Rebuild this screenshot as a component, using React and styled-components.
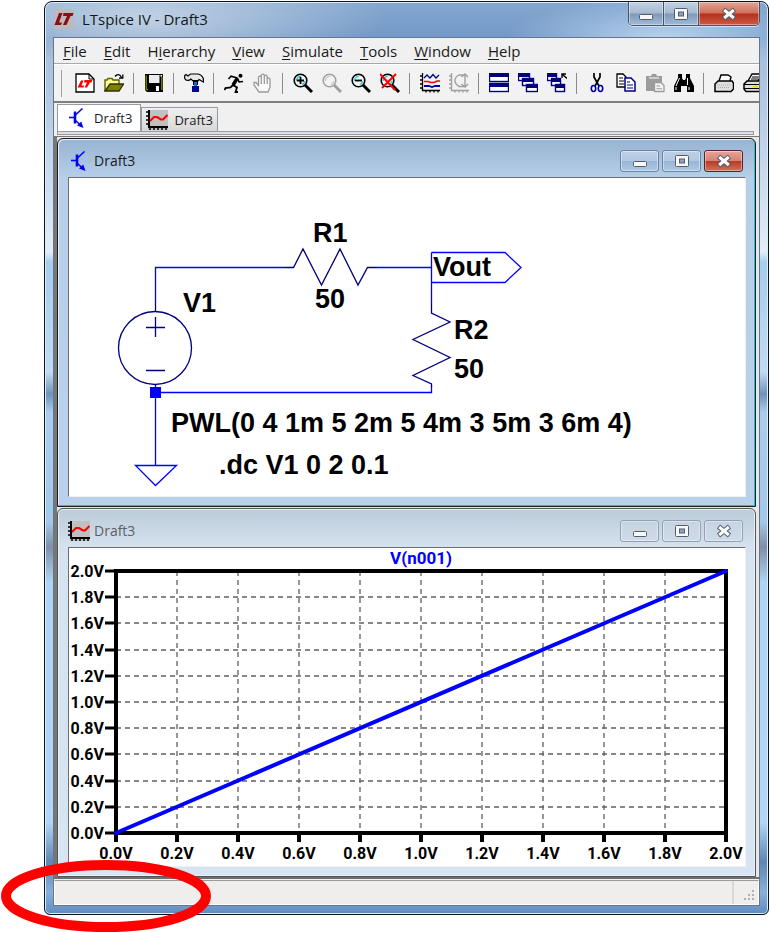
import React from "react"
import styled, { createGlobalStyle } from 'styled-components'

const GlobalStyle = createGlobalStyle`
* { box-sizing: border-box; }
body {
margin: 0;
background: #ffffff;
font-family: "Open Sans", "Noto Sans", sans-serif;
font-size: 15px;
color: #1a1a1a;
}
button {
font: inherit;
color: inherit;
padding: 0;
margin: 0;
border: 0;
background: none;
}
`

const Page = styled.div`
padding: 1px 1px 18px 44px;
`

const Frame = styled.div`
position: relative;
padding: 0 8px 8px;
border: 1px solid #0c151d;
border-radius: 8px 8px 6px 6px;
box-shadow: inset 0 0 0 1px #dcebf8;
background:
radial-gradient(ellipse 240px 60px at 100px 16px, rgba(205, 218, 232, 0.85), transparent),
radial-gradient(ellipse 160px 40px at 620px 36px, rgba(190, 217, 242, 0.9), transparent),
linear-gradient(180deg, #86a8cf 0px, #7298c8 36px, #a9bfdc 60px, #cbdcee 180px, #e2edf8 250px, #a5cdec 260px, #c2dbf2 370px, #6f93bb 392px, #a9cdea 410px, #a5c8ea 520px, #7f8fa8 545px, #b0d4f4 580px, #b4d6f6 820px, #5f86b4 860px, #88b0dc 890px, #5f8cc0 100%);
`

const TitleBar = styled.header`
display: flex;
align-items: flex-start;
height: 35px;
padding-left: 1px;
`

const AppTitle = styled.h1`
flex: 1;
display: flex;
align-items: center;
gap: 8px;
margin: 0;
padding-top: 7px;
font-size: 15px;
line-height: 20px;
font-weight: normal;
color: #101820;
`

const WindowButtons = styled.div`
display: flex;
height: 24px;
border: 1px solid #45556a;
border-top: 0;
border-radius: 0 0 5px 5px;
overflow: hidden;
box-shadow: 0 1px 0 #cfe3f5;
`

const WindowButton = styled.button`
display: flex;
align-items: center;
justify-content: center;
width: ${props => props.$close ? '60px' : '35px'};
border-right: ${props => props.$close ? '0' : '1px solid #45556a'};
box-shadow: inset 0 0 0 1px rgba(255, 255, 255, 0.4);
background: ${props => props.$close
    ? 'linear-gradient(#e2a596 0%, #d0705c 48%, #b5301c 52%, #cc5b42 100%)'
    : 'linear-gradient(#c3d2e3 0%, #a5b9d0 48%, #7f98b6 52%, #a0bbd8 100%)'};
`

const Client = styled.div`
border: 1px solid #66778c;
background: #f0f0f0;
`

const MenuBar = styled.nav`
display: flex;
gap: 17px;
height: 26px;
padding: 0 9px;
border-bottom: 1px solid #a8a8a8;
`

const MenuItem = styled.button`
line-height: 24px;
text-underline-offset: 2px;
`

const ToolBar = styled.div`
display: flex;
align-items: center;
height: 39px;
padding-left: 6px;
border-top: 1px solid #ffffff;
border-bottom: 2px solid #7f7f7f;
background: #f2f2f2;
overflow: hidden;
`

const Grip = styled.div`
flex: none;
width: 2px;
height: 27px;
margin-right: 8px;
border-right: 1px solid #a0a0a0;
`

const Divider = styled.div`
flex: none;
width: 1px;
height: 21px;
margin: 0 5px;
background: #8c8c8c;
`

const ToolButton = styled.button`
flex: none;
display: flex;
justify-content: center;
width: 29px;
`

const TabBar = styled.div`
display: flex;
align-items: flex-end;
height: 28px;
padding-left: 3px;
`

const Tab = styled.button`
display: flex;
align-items: center;
gap: 6px;
height: ${props => props.$selected ? '27px' : '24px'};
padding: ${props => props.$selected ? '0 8px' : '0 4px'};
border: 1px solid #9a9aa4;
border-bottom: 0;
background: ${props => props.$selected ? '#ffffff' : 'linear-gradient(#f0f0f0, #d8d8d8)'};
font-size: 13px;
white-space: nowrap;
`

const TabEdge = styled.div`
height: 4px;
margin: 0 5px 1px 3px;
border: 1px solid #9a9aa4;
background: #dedee4;
`

const Workspace = styled.main`
display: grid;
gap: 1px;
padding: 1px 3px 0 0;
border-left: 3px solid #777777;
border-top: 1px solid #777777;
border-bottom: 2px solid #6e6e6e;
background: #e8e8e8;
`

const Child = styled.section`
padding: 0 9px 9px 10px;
border: 1px solid ${props => props.$active ? '#1b1b1b' : '#555555'};
border-radius: 6px 6px 0 0;
box-shadow: ${props => props.$active ? 'inset -1px -1px 0 #1fc2d6, inset 1px 1px 0 #e6f0fa' : 'inset 0 0 0 1px #e9f0f7'};
background: ${props => props.$active
    ? 'linear-gradient(#98b4d2 0px, #b6cee8 38px, #b9d1ea 100%)'
    : 'linear-gradient(#bccbd9 0px, #d5e2ef 38px, #d7e4f2 100%)'};
`

const ChildTitle = styled.header`
display: flex;
align-items: center;
gap: 3px;
height: 38px;
padding: 6px 3px 0 0;
`

const ChildName = styled.h2`
flex: 1;
display: flex;
align-items: center;
gap: 4px;
margin: 0;
font-size: 14px;
line-height: 20px;
font-weight: normal;
color: ${props => props.$active ? '#1a1a1a' : '#5a5f66'};
`

const ChildButton = styled.button`
display: flex;
align-items: center;
justify-content: center;
width: 39px;
height: 22px;
border: 1px solid ${props => props.$red ? '#5a2228' : props.$active ? '#6d84a2' : '#939fb8'};
border-radius: 3px;
box-shadow: inset 0 0 0 1px rgba(255, 255, 255, 0.4);
background: ${props => props.$red
    ? 'linear-gradient(#e4a79c 0%, #d88272 48%, #b63c26 52%, #d0735c 100%)'
    : props.$active
        ? 'linear-gradient(#bdd1e7 0%, #b2c9e2 48%, #98b5d4 52%, #afcae6 100%)'
        : 'linear-gradient(#c6d3e0, #cfdbe8)'};
`

const Sheet = styled.div`
border: 1px solid #f0f0f0;
border-top-color: #6f6f6f;
border-left-color: #6f6f6f;
background: #ffffff;
`

const Drawing = styled.svg`
display: block;
width: 100%;
height: auto;
`

const SchematicText = styled.text`
font-family: "Liberation Sans", Arial, sans-serif;
font-weight: bold;
font-size: 27px;
fill: #000000;
`

const AxisText = styled.text`
font-family: Roboto, "Liberation Sans", sans-serif;
font-weight: bold;
font-size: ${props => props.$trace ? '17px' : '16px'};
fill: ${props => props.$trace ? '#0000ff' : '#000000'};
`

const StatusBar = styled.footer`
display: flex;
align-items: stretch;
justify-content: flex-end;
height: 25px;
margin-top: 1px;
border: 1px solid #ffffff;
border-top: 1px solid #9b9b9b;
background: #f0eded;
`

const StatusGrip = styled.div`
display: flex;
align-items: flex-end;
justify-content: flex-end;
width: 26px;
padding: 2px;
border-left: 2px solid #d8d8d8;
`

const Marker = styled.svg`
position: absolute;
left: -45px;
bottom: -19px;
width: 212px;
height: 74px;
pointer-events: none;
`

const LogoIcon = () => (
    <svg width="20" height="20" viewBox="0 0 20 20">
        <rect width="20" height="20" fill="#bdb9be" />
        <path d="M5 4 H8.5 L5 13.5 H8 L7 16 H0.5 Z" fill="#8a0f14" />
        <path d="M9.5 4 H19.5 L18.5 7 H16.5 L12.5 16 H9 L13 7 H9 Z" fill="#8a0f14" />
    </svg>
)

const TransistorIcon = () => (
    <svg width="22" height="20" viewBox="-3 0 22 20" stroke="#0000ff" fill="none">
        <path d="M0 9.5 H6" strokeWidth="1.6" />
        <path d="M6 3.5 V15.5" strokeWidth="2.6" />
        <path d="M6 7.5 L13.5 0.5 M6 12 L13 18.5" strokeWidth="1.5" />
        <path d="M14.5 20 L8 17.4 L12.2 13.6 Z" fill="#0000ff" stroke="none" />
    </svg>
)

const PlotIcon = () => (
    <svg width="22" height="20" viewBox="0 0 22 20">
        <rect x="2" width="20" height="20" fill="#c0c0c0" />
        <path d="M3 0 V17 H22" fill="none" stroke="#000" strokeWidth="2" />
        <path d="M0 2 H3 M0 6 H3 M0 10 H3 M0 14 H3 M4 17 V20 M8 17 V20 M12 17 V20 M16 17 V20 M20 17 V20" stroke="#000" strokeWidth="1.5" />
        <path d="M4 11 L8 7 H11 L15 9.5 H17 L21.5 5" fill="none" stroke="#f00" strokeWidth="2.2" />
    </svg>
)

const MinGlyph = () => (
    <svg width="16" height="14" viewBox="0 0 16 14">
        <rect x="1.5" y="7.5" width="13" height="5" rx="1" fill="#f8f8f8" stroke="#545c6c" />
    </svg>
)

const MaxGlyph = () => (
    <svg width="16" height="14" viewBox="0 0 16 14">
        <rect x="1.5" y="1.5" width="13" height="11" rx="1" fill="#f8f8f8" stroke="#545c6c" />
        <rect x="5.5" y="5" width="5" height="4" fill="#8ba4c4" stroke="#545c6c" />
    </svg>
)

const CloseGlyph = () => (
    <svg width="16" height="14" viewBox="0 0 16 14">
        <path d="M2.5 2.5 L13.5 11.5 M13.5 2.5 L2.5 11.5" stroke="#545c6c" strokeWidth="5" />
        <path d="M3.2 3 L12.8 11 M12.8 3 L3.2 11" stroke="#fafafa" strokeWidth="3" />
    </svg>
)

const Lens = ({ color, tint, children }) => (
    <>
        <circle cx="7.5" cy="7.5" r="6.3" fill="#f4f4f4" stroke={color} strokeWidth="1.6" />
        <path d="M3.5 8 A4.5 4.5 0 0 1 8 3.2 M11.8 8 A4.5 4.5 0 0 1 9 11.6" fill="none" stroke={tint} strokeWidth="1.4" />
        <path d="M12 12 L19 19" stroke={color} strokeWidth="3" />
        {children}
    </>
)

const MiniWindow = ({ x, y, w, h }) => (
    <>
        <rect x={x + 0.5} y={y + 0.5} width={w} height={h} fill="#fff" stroke="#000080" strokeWidth="1.4" />
        <rect x={x} y={y} width={w + 1} height="4" fill="#000080" />
    </>
)

const icons = {
    new: (
        <>
            <path d="M1 1 H14 L19 6 V19 H1 Z" fill="#fff" stroke="#000" strokeWidth="1.3" />
            <path d="M14 1 V6 H19" fill="none" stroke="#000" />
            <path d="M6 7.5 H8.5 L6.5 12.5 H9 L8.5 14.5 H2.5 Z" fill="#f00" />
            <path d="M9.5 7 H17.5 L16.5 9.5 H15 L12 14.5 H9.5 L12 9.5 H9 Z" fill="#f00" />
        </>
    ),
    open: (
        <>
            <path d="M1 18 V7 H3 L4 5.5 H8 L9 7 H15 V11" fill="#ffff90" stroke="#606000" strokeWidth="1.4" />
            <path d="M1 18 L6 11 H19.5 L15 18 Z" fill="#808000" stroke="#303000" strokeWidth="1.3" />
            <path d="M11 3.5 C13 0.8 16 1 17.5 4.5 M18.8 1.5 V5.2 H15" fill="none" stroke="#000" strokeWidth="1.3" />
        </>
    ),
    save: (
        <>
            <path d="M1 1 H19 V19 H3 L1 17 Z" fill="#000" />
            <path d="M2.2 2.5 V16.5 H4" fill="none" stroke="#808000" strokeWidth="1.4" />
            <path d="M17.8 4 V17" stroke="#808000" strokeWidth="1.4" />
            <rect x="5" y="2" width="10.5" height="8" fill="#ececec" />
            <rect x="12" y="13" width="3" height="5" fill="#fff" />
            <rect x="16.5" y="2" width="1.6" height="1.6" fill="#fff" />
        </>
    ),
    hammer: (
        <>
            <path d="M0.7 2.5 L2 1.5 L4 3 L6.5 1 H14 C18 2 20 5 19.5 9 L15 6.5 L14 8 H9 L7 6 C5 8 2 8 0.7 5.5 Z" fill="#e8e8e8" stroke="#000" strokeWidth="1.2" />
            <rect x="9" y="7" width="5" height="5" fill="#000" />
            <rect x="10" y="9" width="3" height="4" fill="#1070d0" />
            <rect x="8" y="13" width="7" height="6" fill="#0000a0" />
        </>
    ),
    run: (
        <g fill="none" stroke="#000">
            <circle cx="16.5" cy="2.7" r="2" fill="#000" stroke="none" />
            <path d="M13.5 5 L9 12" strokeWidth="3.4" />
            <path d="M13.5 5 L7 3.2 L4.5 6 M14 6 L15 9 L19 8.5" strokeWidth="1.5" />
            <path d="M9 12 L13 14.5 L11.5 19 H14 M9.5 11.5 L6.5 14.5 L1.5 15 L0.5 17" strokeWidth="1.8" />
        </g>
    ),
    stop: (
        <path d="M6 19 L1 12 V9.5 L3 9.5 L5.5 12.5 V4 L7 3 L8.3 4 V9 V2 L9.8 1 L11.3 2 V9 V3 L12.8 2 L14.2 3.2 V9.5 V5.5 L15.7 5 L17 6 V14 L15 19 Z M8.3 9 V11 M11.3 9 V11 M14.2 9 V11" fill="#fafafa" stroke="#9a9a9a" strokeWidth="1.3" />
    ),
    zoomIn: (
        <Lens color="#000" tint="#20c8d0">
            <path d="M4 7.5 H11 M7.5 4 V11" stroke="#000" strokeWidth="1.8" />
        </Lens>
    ),
    pan: <Lens color="#a0a0a0" tint="#c8c8c8" />,
    zoomOut: (
        <Lens color="#000" tint="#20d8e0">
            <path d="M4 7.5 H11" stroke="#000" strokeWidth="1.8" />
        </Lens>
    ),
    zoomFit: (
        <Lens color="#000" tint="#20d8e0">
            <path d="M0 1 L15 17 M16 1 L2 15" stroke="#f00" strokeWidth="2" />
        </Lens>
    ),
    autorange: (
        <g fill="none">
            <path d="M2.5 0 V17.5 H20 M0 3 H3 M0 7 H3 M0 11 H3 M0 15 H3 M6 17 V19.5 M10 17 V19.5 M14 17 V19.5 M18 17 V19.5" stroke="#000" strokeWidth="1.3" />
            <path d="M4 5 L7 2 L10 5 L13 1.5 L16 5 L19 2" stroke="#000080" strokeWidth="1.3" />
            <path d="M4 8.5 H8 L11 9.5 H14 L17 8 H20" stroke="#f00" strokeWidth="1.6" />
            <path d="M4 13 H9 L12 14 L15 13 H20" stroke="#0000a0" strokeWidth="1.8" />
        </g>
    ),
    lens: (
        <g fill="none" stroke="#a0a0a0" strokeWidth="1.4">
            <path d="M2.5 0 V17.5 H20 M0 3 H3 M0 7 H3 M0 11 H3 M0 15 H3 M6 17 V19.5 M10 17 V19.5 M14 17 V19.5 M18 17 V19.5" />
            <path d="M15 2 H10 C4.5 5 4.5 10 10 13.5 H15 M16 1 V14 M12.5 4 L16 1 L19 4 M12.5 11 L16 14 L19 11" />
        </g>
    ),
    tile: (
        <>
            <MiniWindow x={0} y={0} w={19} h={8} />
            <MiniWindow x={0} y={10} w={19} h={8} />
        </>
    ),
    cascade: (
        <>
            <MiniWindow x={0} y={0} w={11} h={7} />
            <MiniWindow x={4} y={5} w={11} h={7} />
            <MiniWindow x={8} y={11} w={11} h={7} />
        </>
    ),
    restore: (
        <>
            <MiniWindow x={0} y={0} w={9} h={7} />
            <MiniWindow x={4} y={5} w={9} h={7} />
            <MiniWindow x={8} y={11} w={9} h={7} />
            <path d="M20 5.5 L15.5 1.5 M15 5 V1 H19" fill="none" stroke="#000" strokeWidth="1.4" />
        </>
    ),
    cut: (
        <g fill="none">
            <path d="M7 0 V4 L12 13 M13 0 V4 L8 13" stroke="#000" strokeWidth="1.7" />
            <ellipse cx="6.5" cy="15.5" rx="2.2" ry="3" stroke="#0000a0" strokeWidth="1.6" />
            <ellipse cx="13.5" cy="15.5" rx="2.2" ry="3" stroke="#0000a0" strokeWidth="1.6" />
        </g>
    ),
    copy: (
        <>
            <path d="M1 1 H7 L10 4 V14 H1 Z" fill="#fff" stroke="#000" strokeWidth="1.3" />
            <path d="M3 5 H7 M3 8 H8 M3 11 H8" stroke="#000" />
            <path d="M9 5 H15 L19 9 V18 H9 Z" fill="#fff" stroke="#000080" strokeWidth="1.5" />
            <path d="M11 9 H14 M11 12 H17 M11 15 H17" stroke="#000080" />
        </>
    ),
    paste: (
        <>
            <path d="M1 3 H6 L7 1 H11 L12 3 H17 V18 H1 Z" fill="#9c9c9c" />
            <path d="M4 5 H14" stroke="#e4e4e4" strokeWidth="1.4" />
            <path d="M9.5 9.5 H16 L19 12.5 V18.5 H9.5 Z" fill="#f4f4f4" stroke="#9c9c9c" strokeWidth="1.3" />
            <path d="M11.5 13 H15 M11.5 15.7 H17" stroke="#9c9c9c" />
        </>
    ),
    find: (
        <>
            <path d="M4 1 H8 V5 L9 7 H11 L12 5 V1 H16 V5 L20 13 V19 H13 V13 H7 V19 H0 V13 L4 5 Z" fill="#000" />
            <path d="M5.5 5 L2 13 M13.5 5 V12 M2 14 V17 M15 14 V17" stroke="#fff" strokeWidth="1" />
        </>
    ),
    printSetup: (
        <>
            <path d="M5 8 L7 2 H14 L17 4 L16 8" fill="#fff" stroke="#000" strokeWidth="1.4" />
            <path d="M1 11 L4 8 H18 L19.5 10 V16 L17 18.5 H1 Z" fill="#e0e0e0" stroke="#000" strokeWidth="1.5" />
            <path d="M3 12 H16 M4 14.5 H16" stroke="#aaa" strokeDasharray="1 1" />
        </>
    ),
    print: (
        <>
            <path d="M5 8 L9 1 H19 L15 8" fill="#fff" stroke="#000" strokeWidth="1.4" />
            <path d="M9 4 H16 M8 6 H15" stroke="#000" />
            <path d="M1 11 L4 8 H18 L20 10 V16 L17 18.5 H3 L1 16 Z" fill="#e0e0e0" stroke="#000" strokeWidth="1.5" />
            <path d="M1 11.5 H18 M1 15.5 H18" stroke="#000" />
            <path d="M10 13.5 H15" stroke="#f0e000" strokeWidth="2" />
        </>
    )
}

const toolGroups = [
    [['new', 'New Schematic'], ['open', 'Open']],
    [['save', 'Save']],
    [['hammer', 'Control Panel']],
    [['run', 'Run'], ['stop', 'Halt']],
    [['zoomIn', 'Zoom In'], ['pan', 'Pan'], ['zoomOut', 'Zoom Out'], ['zoomFit', 'Zoom Full Extents']],
    [['autorange', 'Autorange'], ['lens', 'Plot Settings']],
    [['tile', 'Tile Windows'], ['cascade', 'Cascade Windows'], ['restore', 'Close All']],
    [['cut', 'Cut'], ['copy', 'Copy'], ['paste', 'Paste'], ['find', 'Find']],
    [['printSetup', 'Print Setup'], ['print', 'Print']]
]

// text before the access key, the key, text after it
const menus = [
    ['', 'F', 'ile'],
    ['', 'E', 'dit'],
    ['H', 'i', 'erarchy'],
    ['', 'V', 'iew'],
    ['', 'S', 'imulate'],
    ['', 'T', 'ools'],
    ['', 'W', 'indow'],
    ['', 'H', 'elp']
]

const Tools = () => (
    <ToolBar role="toolbar">
        <Grip />
        {toolGroups.map((group, i) => (
            <React.Fragment key={i}>
                {i > 0 && <Divider />}
                {group.map(([icon, label]) => (
                    <ToolButton key={icon} type="button" aria-label={label}>
                        <svg width="20" height="20" viewBox="0 0 20 20">{icons[icon]}</svg>
                    </ToolButton>
                ))}
            </React.Fragment>
        ))}
    </ToolBar>
)

const ChildWindow = ({ icon, name, active, children }) => (
    <Child $active={active}>
        <ChildTitle>
            <ChildName $active={active}>{icon}{name}</ChildName>
            <ChildButton type="button" aria-label="Minimize" $active={active}><MinGlyph /></ChildButton>
            <ChildButton type="button" aria-label="Maximize" $active={active}><MaxGlyph /></ChildButton>
            <ChildButton type="button" aria-label="Close" $active={active} $red={active}><CloseGlyph /></ChildButton>
        </ChildTitle>
        <Sheet>{children}</Sheet>
    </Child>
)

const Schematic = () => (
    <Drawing viewBox="0 0 676 318">
        <g fill="none" stroke="#0000ff" strokeWidth="1.3">
            <path d="M86.5 126 V89.5 H216 M308 89.5 H362.5 M362.5 74.5 V126 M362.5 74.5 H436 L452 89.5 L436 104.5 H362.5" />
            <path d="M362.5 208 V214.5 H86.5 M86.5 214.5 V287.5 M66.5 287.5 H107.5 L86.5 307.5 Z" />
        </g>
        <g fill="none" stroke="#000080" strokeWidth="1.3">
            <path d="M216 89.5 H224.5 L234 71 L252.5 107 L271 71 L289 107 L298.5 89.5 H308" />
            <path d="M362.5 126 V135 L381 144 L344 161.5 L381 179.5 L344 197.5 L362.5 206 V209" />
            <circle cx="86" cy="170" r="36.5" />
            <path d="M86.5 126 V134 M86.5 206 V212 M77 149.5 H96 M86.5 139 V159 M77 192.5 H96" />
        </g>
        <rect x="81" y="209" width="11" height="11" fill="#0000ff" />
        <SchematicText x="244" y="64">R1</SchematicText>
        <SchematicText x="246" y="130">50</SchematicText>
        <SchematicText x="114" y="134">V1</SchematicText>
        <SchematicText x="364" y="98">Vout</SchematicText>
        <SchematicText x="385" y="161">R2</SchematicText>
        <SchematicText x="385" y="200">50</SchematicText>
        <SchematicText x="102" y="254">PWL(0 4 1m 5 2m 5 4m 3 5m 3 6m 4)</SchematicText>
        <SchematicText x="150" y="296">.dc V1 0 2 0.1</SchematicText>
    </Drawing>
)

const left = 47
const right = 657
const top = 23
const bottom = 285
const steps = [0, 1, 2, 3, 4, 5, 6, 7, 8, 9, 10]

const Waveform = () => {
    const px = i => Math.round(left + (right - left) * i / 10)
    const py = i => Math.round(bottom - (bottom - top) * i / 10)
    return (
        <Drawing viewBox="0 0 676 318">
            <g stroke="#606060" strokeWidth="1.3" strokeDasharray="5 4">
                {steps.slice(1, 10).map(i => (
                    <path key={i} d={`M${px(i)} ${top} V${bottom} M${left} ${py(i)} H${right}`} />
                ))}
            </g>
            <rect x={left} y={top} width={right - left} height={bottom - top} fill="none" stroke="#000" strokeWidth="4" />
            {steps.map(i => (
                <g key={i}>
                    <path d={`M${px(i)} ${bottom} v9`} stroke="#000" strokeWidth="4" />
                    <path d={`M${left} ${py(i)} h-11`} stroke="#000" strokeWidth="3" />
                    <AxisText x={px(i)} y="311" textAnchor="middle">{(i * 0.2).toFixed(1)}V</AxisText>
                    <AxisText x="35" y={py(i) + 6} textAnchor="end">{(i * 0.2).toFixed(1)}V</AxisText>
                </g>
            ))}
            <path d={`M${left} ${bottom} L${right} ${top}`} stroke="#0000ff" strokeWidth="4" strokeLinecap="round" />
            <AxisText $trace x="352" y="16" textAnchor="middle">V(n001)</AxisText>
        </Drawing>
    )
}

const App = () => (
    <>
        <GlobalStyle />
        <Page>
            <Frame>
                <TitleBar>
                    <AppTitle><LogoIcon />LTspice IV - Draft3</AppTitle>
                    <WindowButtons>
                        <WindowButton type="button" aria-label="Minimize"><MinGlyph /></WindowButton>
                        <WindowButton type="button" aria-label="Maximize"><MaxGlyph /></WindowButton>
                        <WindowButton type="button" aria-label="Close" $close><CloseGlyph /></WindowButton>
                    </WindowButtons>
                </TitleBar>
                <Client>
                    <MenuBar>
                        {menus.map(([before, key, after]) => (
                            <MenuItem key={key + after} type="button">{before}<u>{key}</u>{after}</MenuItem>
                        ))}
                    </MenuBar>
                    <Tools />
                    <TabBar role="tablist">
                        <Tab type="button" role="tab" aria-selected="true" $selected><TransistorIcon />Draft3</Tab>
                        <Tab type="button" role="tab" aria-selected="false"><PlotIcon />Draft3</Tab>
                    </TabBar>
                    <TabEdge />
                    <Workspace>
                        <ChildWindow active name="Draft3" icon={<TransistorIcon />}>
                            <Schematic />
                        </ChildWindow>
                        <ChildWindow name="Draft3" icon={<PlotIcon />}>
                            <Waveform />
                        </ChildWindow>
                    </Workspace>
                    <StatusBar>
                        <StatusGrip>
                            <svg width="12" height="12" viewBox="0 0 12 12" fill="#b0b0b0">
                                <path d="M8 0h2v2h-2z M4 4h2v2h-2z M8 4h2v2h-2z M0 8h2v2h-2z M4 8h2v2h-2z M8 8h2v2h-2z" />
                            </svg>
                        </StatusGrip>
                    </StatusBar>
                </Client>
                <Marker viewBox="0 0 212 74" aria-hidden="true">
                    <ellipse cx="106" cy="37" rx="100" ry="31" fill="none" stroke="#ff0000" strokeWidth="10" />
                </Marker>
            </Frame>
        </Page>
    </>
)

export default App
